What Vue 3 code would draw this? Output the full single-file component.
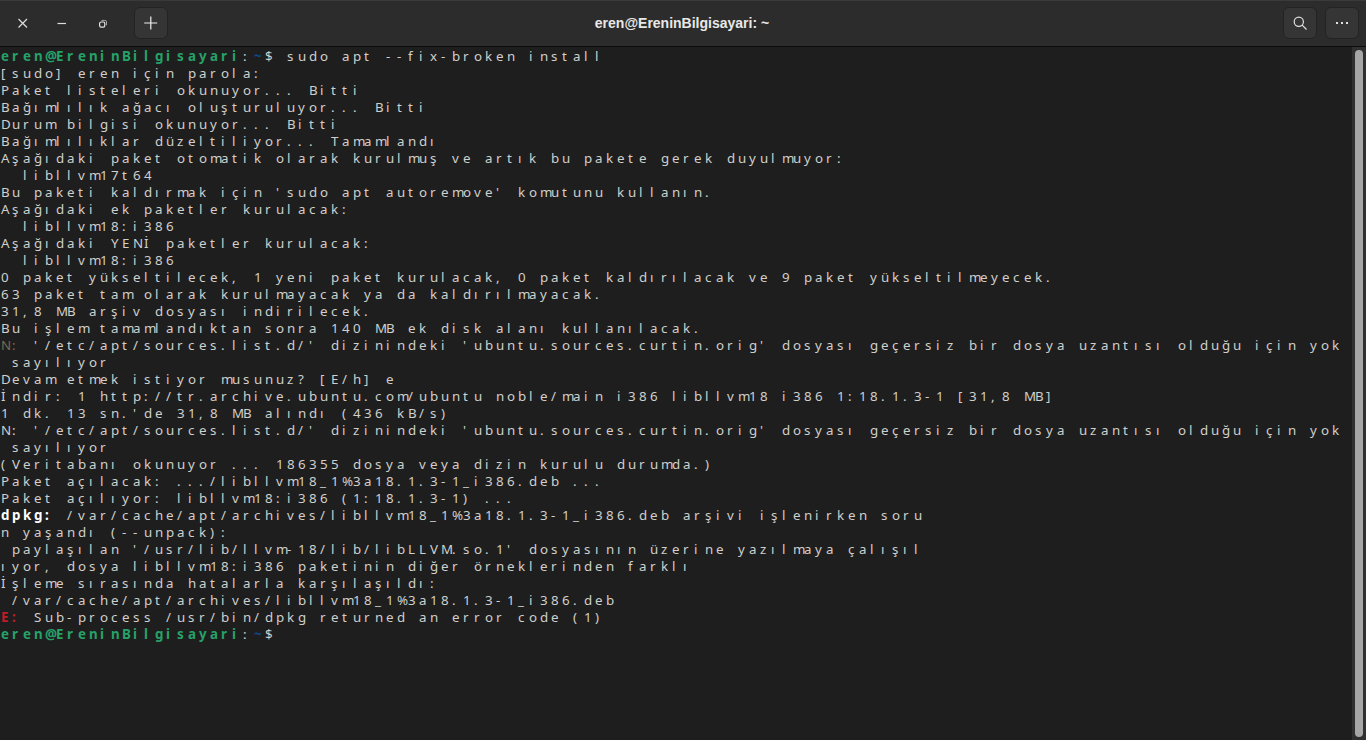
<script setup>
const G = 'g', B = 'b', Y = 'y', R = 'r', W = 'w'
const prompt = [['eren@EreninBilgisayari', G], [':', ''], ['~', B], ['$', '']]
const notice = " '/etc/apt/sources.list.d/' dizinindeki 'ubuntu.sources.curtin.orig' dosyası geçersiz bir dosya uzantısı olduğu için yok"
const raw = [
  [...prompt, [' sudo apt --fix-broken install', '']],
  '[sudo] eren için parola:',
  'Paket listeleri okunuyor... Bitti',
  'Bağımlılık ağacı oluşturuluyor... Bitti',
  'Durum bilgisi okunuyor... Bitti',
  'Bağımlılıklar düzeltiliyor... Tamamlandı',
  'Aşağıdaki paket otomatik olarak kurulmuş ve artık bu pakete gerek duyulmuyor:',
  '  libllvm17t64',
  "Bu paketi kaldırmak için 'sudo apt autoremove' komutunu kullanın.",
  'Aşağıdaki ek paketler kurulacak:',
  '  libllvm18:i386',
  'Aşağıdaki YENİ paketler kurulacak:',
  '  libllvm18:i386',
  '0 paket yükseltilecek, 1 yeni paket kurulacak, 0 paket kaldırılacak ve 9 paket yükseltilmeyecek.',
  '63 paket tam olarak kurulmayacak ya da kaldırılmayacak.',
  '31,8 MB arşiv dosyası indirilecek.',
  'Bu işlem tamamlandıktan sonra 140 MB ek disk alanı kullanılacak.',
  [['N:', Y], [notice, '']],
  ' sayılıyor',
  'Devam etmek istiyor musunuz? [E/h] e',
  'İndir: 1 http://tr.archive.ubuntu.com/ubuntu noble/main i386 libllvm18 i386 1:18.1.3-1 [31,8 MB]',
  "1 dk. 13 sn.'de 31,8 MB alındı (436 kB/s)",
  'N:' + notice,
  ' sayılıyor',
  '(Veritabanı okunuyor ... 186355 dosya veya dizin kurulu durumda.)',
  'Paket açılacak: .../libllvm18_1%3a18.1.3-1_i386.deb ...',
  'Paket açılıyor: libllvm18:i386 (1:18.1.3-1) ...',
  [['dpkg:', W], [' /var/cache/apt/archives/libllvm18_1%3a18.1.3-1_i386.deb arşivi işlenirken soru', '']],
  'n yaşandı (--unpack):',
  " paylaşılan '/usr/lib/llvm-18/lib/libLLVM.so.1' dosyasının üzerine yazılmaya çalışıl",
  'ıyor, dosya libllvm18:i386 paketinin diğer örneklerinden farklı',
  'İşleme sırasında hatalarla karşılaşıldı:',
  ' /var/cache/apt/archives/libllvm18_1%3a18.1.3-1_i386.deb',
  [['E:', R], [' Sub-process /usr/bin/dpkg returned an error code (1)', '']],
  prompt
]
const rows = raw.map(line => {
  const segs = typeof line === 'string' ? [[line, '']] : line
  const cells = []
  for (const [text, tone] of segs) {
    for (const ch of text) cells.push({ ch, tone })
  }
  return cells
})
</script>

<template>
  <div class="window">
    <header class="bar">
      <div class="controls">
        <button class="ctl">
          <svg width="16" height="16" viewBox="0 0 16 16"><path d="M3.5 4l8.5 8.5M12 4l-8.5 8.5" stroke="#dcdcdc" stroke-width="1.2" fill="none"/></svg>
        </button>
        <button class="ctl">
          <svg width="16" height="16" viewBox="0 0 16 16"><path d="M3.5 8.5h8.5" stroke="#dcdcdc" stroke-width="1.2" fill="none"/></svg>
        </button>
        <button class="ctl">
          <svg width="16" height="16" viewBox="0 0 16 16"><rect x="5.6" y="7" width="5.2" height="5.2" rx="1.6" stroke="#e4e4e4" stroke-width="1.2" fill="none"/><path d="M7.5 5.4h3.4a1.6 1.6 0 0 1 1.6 1.6v3.2" stroke="#a8a8a8" stroke-width="1" fill="none"/></svg>
        </button>
        <button class="btn plus">
          <svg width="16" height="16" viewBox="0 0 16 16"><path d="M7.8 1.5v13M1.2 8h13" stroke="#f0f0f0" stroke-width="1.2" fill="none"/></svg>
        </button>
      </div>
      <div class="title">eren@EreninBilgisayari: ~</div>
      <div class="actions">
        <button class="btn">
          <svg width="16" height="16" viewBox="0 0 16 16"><circle cx="6.8" cy="6.8" r="4.6" stroke="#e0e0e0" stroke-width="1.2" fill="none"/><path d="M10.2 10.2l4.3 4.3" stroke="#e0e0e0" stroke-width="1.2" fill="none"/></svg>
        </button>
        <button class="btn">
          <svg width="16" height="16" viewBox="0 0 16 16"><g fill="#e0e0e0"><rect x="2" y="7" width="2" height="2"/><rect x="7" y="7" width="2" height="2"/><rect x="12" y="7" width="2" height="2"/></g></svg>
        </button>
      </div>
    </header>
    <div class="body">
      <main class="term">
        <div v-for="(cells, r) in rows" :key="r" class="row">
          <span v-for="(c, i) in cells" :key="i" class="cell" :class="c.tone">{{ c.ch }}</span>
        </div>
      </main>
      <div class="track"><div class="thumb"></div></div>
    </div>
  </div>
</template>

<style>
html, body { margin: 0; background: #1e1e1e; overflow: hidden; }
</style>

<style scoped>
.window {
  width: 1366px;
  height: 740px;
  display: flex;
  flex-direction: column;
  background: #1e1e1e;
  overflow: hidden;
}
.bar {
  height: 46px;
  flex: none;
  display: flex;
  align-items: center;
  justify-content: space-between;
  position: relative;
  padding: 0 7px 0 3px;
  background: #2c2c2c;
  border-bottom: 1px solid #0c0c0c;
  box-shadow: inset 0 1px 0 #3a3a3a;
}
.controls, .actions { display: flex; align-items: center; gap: 8px; }
.controls { gap: 0; }
.ctl {
  width: 39.5px;
  height: 32px;
  padding: 0;
  background: none;
  border: 0;
  display: flex;
  align-items: center;
  justify-content: center;
}
.btn {
  width: 34px;
  height: 32px;
  padding: 0;
  display: flex;
  align-items: center;
  justify-content: center;
  background: #353535;
  border: 1px solid #232323;
  border-radius: 6px;
  box-sizing: border-box;
}
.plus { margin-left: 12px; }
.title {
  position: absolute;
  left: 0;
  right: 2px;
  text-align: center;
  color: #e8e8e8;
  font: bold 14px "Liberation Sans", Arial, sans-serif;
  pointer-events: none;
}
.body { flex: 1; display: flex; min-height: 0; }
.term {
  flex: 1;
  padding: 1px 0 0 1px;
  font: 13.33px/17px "Noto Sans", sans-serif;
  color: #d0cfcc;
  overflow: hidden;
}
.row { height: 17px; display: flex; white-space: pre; }
.cell { width: 11px; flex: none; text-align: left; }
.g { color: #26a269; font-weight: 700; }
.b { color: #12488b; font-weight: 700; }
.y { color: #7a6a50; }
.r { color: #c01c28; font-weight: 700; }
.w { color: #ffffff; font-weight: 700; }
.track {
  width: 14px;
  flex: none;
  background: #303030;
  padding: 3px;
  box-sizing: border-box;
  display: flex;
}
.thumb { flex: 1; background: #a6a6a6; border-radius: 4px; }
</style>
